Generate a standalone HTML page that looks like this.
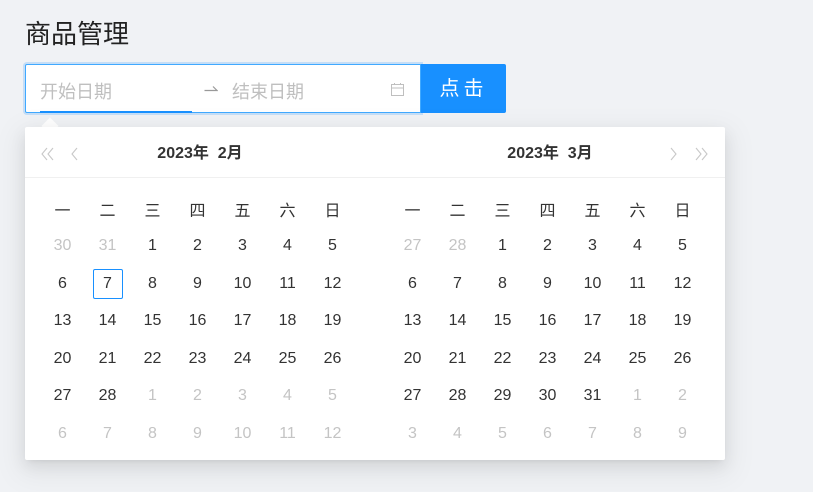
<!DOCTYPE html><html><head><meta charset="utf-8"><style>
body{margin:0;width:813px;height:492px;background:#f0f2f5;font-family:"Liberation Sans","Noto Sans CJK SC",sans-serif;position:relative;overflow:hidden;color:rgba(0,0,0,.85)}
.t{position:absolute;left:25px;top:14px;font-size:26px;color:#222}
.inp{position:absolute;left:25px;top:64px;width:394px;height:47px;background:#fff;border:1px solid #40a9ff;border-radius:2px 0 0 2px;box-shadow:0 0 0 2px rgba(24,144,255,.2)}
.ph{position:absolute;top:13px;font-size:18px;color:#bfbfbf}
.bar{position:absolute;left:14px;bottom:-1px;width:152px;height:2px;background:#1890ff}
.btn{position:absolute;left:421px;top:64px;width:85px;height:49px;background:#1890ff;color:#fff;font-size:20px;text-align:center;line-height:51px;border-radius:0 2px 2px 0;letter-spacing:4px}
.pan{position:absolute;left:25px;top:127px;width:700px;height:333px;background:#fff;border-radius:2px;box-shadow:0 3px 6px -4px rgba(0,0,0,.12),0 6px 16px 0 rgba(0,0,0,.08),0 9px 28px 8px rgba(0,0,0,.05)}
.arr{position:absolute;left:44px;top:120px;width:12px;height:12px;background:#fff;transform:rotate(45deg)}
.hd{position:absolute;top:1px;height:50px;line-height:52px;font-size:16px;font-weight:600;color:#333;width:350px;text-align:center}
.line{position:absolute;left:0;top:50px;width:700px;height:1px;background:#f0f0f0}
.g{position:absolute;top:63px;width:315px;display:grid;grid-template-columns:repeat(7,45px);grid-auto-rows:37.5px;font-size:16px}
.g div{display:flex;align-items:center;justify-content:center;color:#333}
.g .o{color:#c4c4c4}
.sel span{border:1px solid #1890ff;border-radius:2px;width:28px;height:28px;display:flex;align-items:center;justify-content:center}
</style></head><body>
<div class="t">商品管理</div>
<div class="inp"><span class="ph" style="left:14px">开始日期</span>
<svg style="position:absolute;left:178px;top:20px" width="14" height="8" viewBox="0 0 14 8"><path d="M0.5 5.5H13L9 1.5" fill="none" stroke="#999" stroke-width="1.2"/></svg>
<span class="ph" style="left:206px">结束日期</span>
<svg style="position:absolute;left:364px;top:17px" width="15" height="15" viewBox="0 0 15 15"><rect x="1.5" y="2.5" width="12" height="11" fill="none" stroke="#bfbfbf"/><line x1="1.5" y1="6" x2="13.5" y2="6" stroke="#bfbfbf"/><line x1="4.5" y1="1" x2="4.5" y2="3" stroke="#bfbfbf"/><line x1="10.5" y1="1" x2="10.5" y2="3" stroke="#bfbfbf"/></svg>
<div class="bar"></div></div>
<div class="btn">点击</div>
<div class="arr"></div>
<div class="pan">
<div class="hd" style="left:0">2023年&nbsp; 2月</div>
<div class="hd" style="left:350px">2023年&nbsp; 3月</div>
<svg style="position:absolute;left:16px;top:20px" width="45" height="14" viewBox="0 0 45 14"><path d="M6 1L1 7L6 13M12 1L7 7L12 13M36 1L31 7L36 13" fill="none" stroke="#c8c8c8" stroke-width="1.1"/></svg>
<svg style="position:absolute;left:643px;top:20px" width="45" height="14" viewBox="0 0 45 14"><path d="M3 1L8 7L3 13M28 1L33 7L28 13M34 1L39 7L34 13" fill="none" stroke="#c8c8c8" stroke-width="1.1"/></svg>
<div class="line"></div>
<div class="g" style="left:15px">
<div>一</div><div>二</div><div>三</div><div>四</div><div>五</div><div>六</div><div>日</div>
<div class="o">30</div><div class="o">31</div><div>1</div><div>2</div><div>3</div><div>4</div><div>5</div>
<div>6</div><div class="sel"><span>7</span></div><div>8</div><div>9</div><div>10</div><div>11</div><div>12</div>
<div>13</div><div>14</div><div>15</div><div>16</div><div>17</div><div>18</div><div>19</div>
<div>20</div><div>21</div><div>22</div><div>23</div><div>24</div><div>25</div><div>26</div>
<div>27</div><div>28</div><div class="o">1</div><div class="o">2</div><div class="o">3</div><div class="o">4</div><div class="o">5</div>
<div class="o">6</div><div class="o">7</div><div class="o">8</div><div class="o">9</div><div class="o">10</div><div class="o">11</div><div class="o">12</div>
</div>
<div class="g" style="left:365px">
<div>一</div><div>二</div><div>三</div><div>四</div><div>五</div><div>六</div><div>日</div>
<div class="o">27</div><div class="o">28</div><div>1</div><div>2</div><div>3</div><div>4</div><div>5</div>
<div>6</div><div>7</div><div>8</div><div>9</div><div>10</div><div>11</div><div>12</div>
<div>13</div><div>14</div><div>15</div><div>16</div><div>17</div><div>18</div><div>19</div>
<div>20</div><div>21</div><div>22</div><div>23</div><div>24</div><div>25</div><div>26</div>
<div>27</div><div>28</div><div>29</div><div>30</div><div>31</div><div class="o">1</div><div class="o">2</div>
<div class="o">3</div><div class="o">4</div><div class="o">5</div><div class="o">6</div><div class="o">7</div><div class="o">8</div><div class="o">9</div>
</div>
</div>
</body></html>
